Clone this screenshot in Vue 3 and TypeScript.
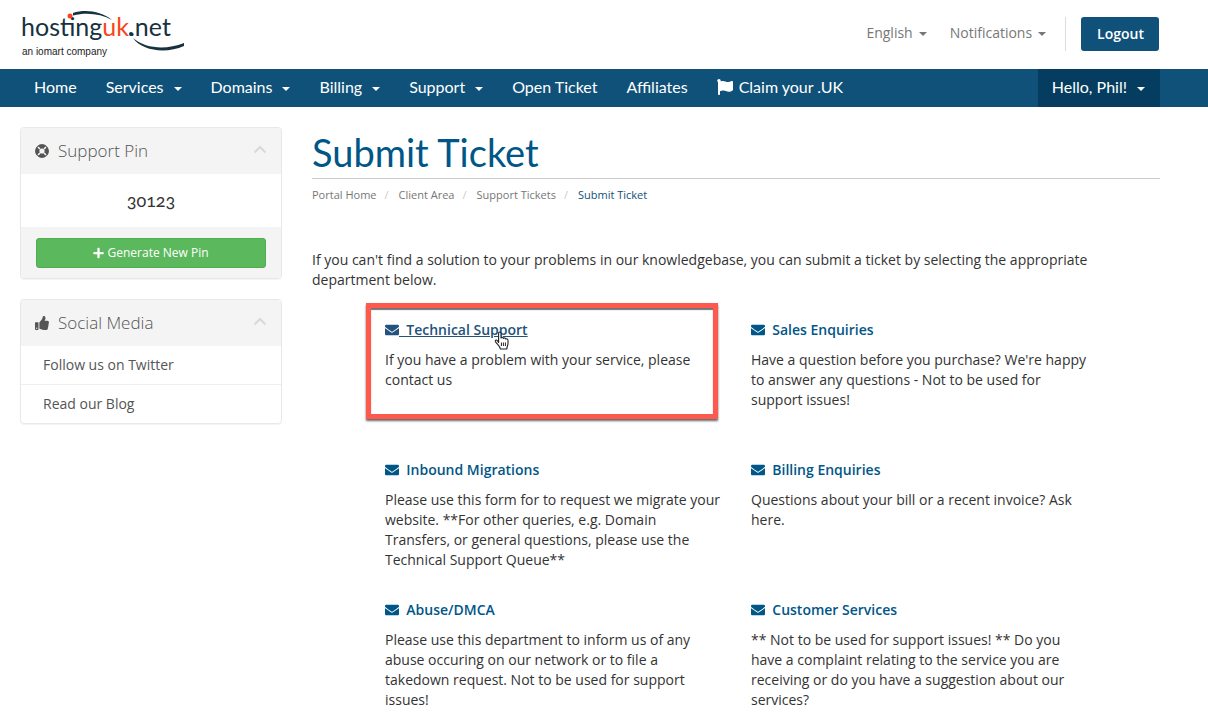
<script setup lang="ts">
interface NavItem {
  label: string
  menu?: boolean
  flag?: boolean
}

interface Department {
  name: string
  text: string
  highlighted?: boolean
}

const navItems: NavItem[] = [
  { label: 'Home' },
  { label: 'Services', menu: true },
  { label: 'Domains', menu: true },
  { label: 'Billing', menu: true },
  { label: 'Support', menu: true },
  { label: 'Open Ticket' },
  { label: 'Affiliates' },
  { label: 'Claim your .UK', flag: true },
]

const crumbs: string[] = ['Portal Home', 'Client Area', 'Support Tickets']

const socialLinks: string[] = ['Follow us on Twitter', 'Read our Blog']

const departments: Department[] = [
  {
    name: 'Technical Support',
    text: 'If you have a problem with your service, please contact us',
    highlighted: true,
  },
  {
    name: 'Sales Enquiries',
    text: "Have a question before you purchase? We're happy to answer any questions - Not to be used for support issues!",
  },
  {
    name: 'Inbound Migrations',
    text: 'Please use this form for to request we migrate your website. **For other queries, e.g. Domain Transfers, or general questions, please use the Technical Support Queue**',
  },
  {
    name: 'Billing Enquiries',
    text: 'Questions about your bill or a recent invoice? Ask here.',
  },
  {
    name: 'Abuse/DMCA',
    text: 'Please use this department to inform us of any abuse occuring on our network or to file a takedown request. Not to be used for support issues!',
  },
  {
    name: 'Customer Services',
    text: '** Not to be used for support issues! ** Do you have a complaint relating to the service you are receiving or do you have a suggestion about our services?',
  },
]
</script>

<template>
  <div class="page">
    <header class="top">
      <a href="#" class="logo" aria-label="hostinguk.net, an iomart company">
        <svg width="170" height="52" viewBox="0 0 170 52">
          <text x="1" y="28" class="logo-name">hosting<tspan class="logo-uk">uk</tspan>.net</text>
          <text x="2" y="47" class="logo-sub">an iomart company</text>
          <path d="M53 5C65 1 81 3 92 12C81 6 67 4 53 7.500Z" fill="#17323f" />
          <circle cx="50" cy="8" r="2.500" fill="#f8461c" />
          <circle cx="111" cy="26" r="2" fill="#17323f" />
          <path d="M113 30C122 43 146 46 164 38L164 35C146 42 126 41 113 30Z" fill="#17323f" />
        </svg>
      </a>
      <div class="tools">
        <button type="button" class="plain">English<span class="caret"></span></button>
        <button type="button" class="plain">Notifications<span class="caret"></span></button>
        <div class="logout-wrap"><button type="button" class="logout">Logout</button></div>
      </div>
    </header>

    <nav class="bar">
      <template v-for="item in navItems" :key="item.label">
        <button v-if="item.menu" type="button" class="nav-item">{{ item.label }}<span class="caret"></span></button>
        <a v-else href="#" class="nav-item">
          <svg v-if="item.flag" class="flag" width="16" height="16" viewBox="0 0 512 512" fill="currentColor">
            <path d="M349.565 98.783C295.978 98.783 251.721 64 184.348 64c-24.955 0-47.309 4.384-68.045 12.013a55.947 55.947 0 0 0 3.586-23.562C118.117 24.015 94.806 1.206 66.338.048 34.345-1.254 8 24.296 8 56c0 19.026 9.497 35.825 24 45.945V488c0 13.255 10.745 24 24 24h16c13.255 0 24-10.745 24-24v-94.4c28.311-12.064 63.582-22.122 114.435-22.122 53.588 0 97.844 34.783 165.217 34.783 48.169 0 86.667-16.294 122.505-40.858C506.84 359.452 512 349.571 512 339.045v-243.1c0-23.393-24.269-38.87-45.485-29.016-34.338 15.948-76.454 31.854-116.95 31.854z" />
          </svg>{{ item.label }}</a>
      </template>
      <button type="button" class="nav-item account">Hello, Phil!<span class="caret"></span></button>
    </nav>

    <div class="body">
      <aside class="side">
        <section class="panel">
          <h2 class="panel-head">
            <svg width="14" height="14" viewBox="0 0 14 14">
              <circle cx="7" cy="7" r="4.7" fill="none" stroke="#555" stroke-width="4.2" />
              <path d="M2.6 2.6L5 5M11.4 2.6L9 5M2.6 11.4L5 9M11.4 11.4L9 9" stroke="#f4f4f4" stroke-width="1.5" />
              <circle cx="7" cy="7" r="6.2" fill="none" stroke="#555" stroke-width="1" />
            </svg>
            <span>Support Pin</span>
            <svg class="chevron" width="14" height="14" viewBox="0 0 14 14"><path d="M1.5 8.5L7 3L12.5 8.5" /></svg>
          </h2>
          <div class="pin">30123</div>
          <div class="panel-foot">
            <button type="button" class="generate">
              <svg width="11" height="12" viewBox="0 0 448 512" fill="currentColor">
                <path d="M416 208H272V64c0-17.67-14.33-32-32-32h-32c-17.67 0-32 14.33-32 32v144H32c-17.67 0-32 14.33-32 32v32c0 17.67 14.33 32 32 32h144v144c0 17.67 14.33 32 32 32h32c17.67 0 32-14.33 32-32V304h144c17.67 0 32-14.33 32-32v-32c0-17.67-14.33-32-32-32z" />
              </svg>
              Generate New Pin
            </button>
          </div>
        </section>

        <section class="panel">
          <h2 class="panel-head">
            <svg width="14" height="14" viewBox="0 0 512 512" fill="#555">
              <path d="M104 224H24c-13.255 0-24 10.745-24 24v240c0 13.255 10.745 24 24 24h80c13.255 0 24-10.745 24-24V248c0-13.255-10.745-24-24-24zM64 472c-13.255 0-24-10.745-24-24s10.745-24 24-24 24 10.745 24 24-10.745 24-24 24zM384 81.452c0 42.416-25.97 66.208-33.277 94.548h101.723c33.397 0 59.397 27.746 59.553 58.098.084 17.938-7.546 37.249-19.439 49.197l-.11.11c9.836 23.337 8.237 56.037-9.308 79.469 8.681 25.895-.069 57.704-16.382 74.757 4.298 17.598 2.244 32.575-6.148 44.632C440.202 511.587 389.616 512 346.839 512l-2.845-.001c-48.287-.017-87.806-17.598-119.56-31.725-15.957-7.099-36.821-15.887-52.651-16.178-6.54-.12-11.783-5.457-11.783-11.998v-213.77c0-3.2 1.282-6.271 3.558-8.521 39.614-39.144 56.648-80.587 89.117-113.111 14.804-14.832 20.188-37.236 25.393-58.902C282.515 39.293 291.817 0 312 0c24 0 72 8 72 81.452z" />
            </svg>
            <span>Social Media</span>
            <svg class="chevron" width="14" height="14" viewBox="0 0 14 14"><path d="M1.5 8.5L7 3L12.5 8.5" /></svg>
          </h2>
          <a v-for="link in socialLinks" :key="link" href="#" class="side-link">{{ link }}</a>
        </section>
      </aside>

      <main class="main">
        <h1>Submit Ticket</h1>
        <ol class="crumbs">
          <li v-for="crumb in crumbs" :key="crumb"><a href="#">{{ crumb }}</a></li>
          <li class="current">Submit Ticket</li>
        </ol>
        <p class="intro">If you can't find a solution to your problems in our knowledgebase, you can submit a ticket by selecting the appropriate department below.</p>
        <div class="departments">
          <article v-for="dept in departments" :key="dept.name" class="dept">
            <div v-if="dept.highlighted" class="frame"></div>
            <a href="#" class="dept-link" :class="{ hovered: dept.highlighted }"><svg class="mail" width="14" height="14" viewBox="0 0 512 512" fill="currentColor"><path d="M502.3 190.8c3.9-3.1 9.7-.2 9.7 4.7V400c0 26.5-21.5 48-48 48H48c-26.5 0-48-21.5-48-48V195.6c0-5 5.7-7.8 9.7-4.7 22.4 17.4 52.1 39.5 154.1 113.6 21.1 15.4 56.7 47.8 92.2 47.6 35.7.3 72-32.8 92.3-47.6 102-74.1 131.6-96.3 154-113.7zM256 320c23.2.4 56.6-29.2 73.4-41.4 132.7-96.3 142.8-104.7 173.4-128.7 5.8-4.5 9.2-11.5 9.2-18.9v-19c0-26.5-21.5-48-48-48H48c-26.5 0-48 21.5-48 48v19c0 7.4 3.4 14.3 9.2 18.9 30.6 23.9 40.7 32.4 173.4 128.7 16.8 12.2 50.2 41.8 73.4 41.4z" /></svg>&nbsp; {{ dept.name }}</a>
            <p>{{ dept.text }}</p>
            <svg v-if="dept.highlighted" class="pointer" width="16" height="19" viewBox="0 0 16 19">
              <path d="M4.6 11.5V2.4C4.6 .6 7 .6 7 2.4V7C7.4 6 9.2 6.1 9.4 7.4C10 6.5 11.6 6.8 11.8 8.1C12.6 7.4 14 7.900 14 9.3V12.5C14 14.6 12.9 15.4 12.8 18H6.4C6.2 15.6 3.6 13.6 1.5 10.8C.6 9.4 2.2 8.3 3.3 9.6Z" fill="#fff" stroke="#222" stroke-width="1.1" stroke-linejoin="round" />
              <path d="M7.4 11.5V15M9.4 11.5V15M11.4 11.5V15" stroke="#222" stroke-width="1" fill="none" />
            </svg>
          </article>
        </div>
      </main>
    </div>
  </div>
</template>

<style>
body {
  margin: 0;
  background: #fff;
}
</style>

<style scoped>
.page {
  font: 14px/20px "Open Sans", "Noto Sans", sans-serif;
  color: #333;
  overflow-x: hidden;
}

a {
  text-decoration: none;
}

button {
  font-family: inherit;
  border: 0;
  cursor: pointer;
}

.caret {
  display: inline-block;
  border: 4px solid transparent;
  border-top-color: currentColor;
  border-bottom: 0;
  vertical-align: middle;
}

.top {
  display: flex;
  justify-content: space-between;
  align-items: center;
  padding: 8px 49px 9px 20px;
}

.logo svg {
  display: block;
}

.logo-name {
  font: 400 25px Lato, sans-serif;
  fill: #17323f;
}

.logo-uk {
  fill: #f8461c;
}

.logo-sub {
  font: 10px "Liberation Sans", sans-serif;
  fill: #222;
}

.tools {
  display: flex;
  align-items: center;
}

.plain {
  margin-right: 23px;
  padding: 0 0 2px;
  background: none;
  color: #777;
  font-size: 14px;
  line-height: 20px;
}

.plain .caret {
  margin-left: 6px;
}

.logout-wrap {
  padding-left: 15px;
  border-left: 1px solid #ddd;
  margin-left: -4px;
}

.logout {
  display: block;
  padding: 7px 15px 7px 16px;
  border-radius: 3px;
  background: #0f5179;
  color: #fff;
  font-size: 14px;
  font-weight: 600;
  line-height: 20px;
}

.bar {
  display: flex;
  padding: 0 48px 0 20px;
  background: #0f5179;
}

.nav-item {
  padding: 8px 15px 10px 14px;
  background: none;
  color: #fff;
  font: 400 16px/20px Lato, sans-serif;
  white-space: nowrap;
}

.nav-item .caret {
  margin-left: 10px;
}

.flag {
  margin-right: 6px;
  vertical-align: -2px;
}

.account {
  margin-left: auto;
  background: #053d60;
}

.body {
  display: grid;
  grid-template-columns: 262px 1fr;
  gap: 30px;
  align-items: start;
  padding: 20px 48px 0 20px;
}

.side {
  display: grid;
  gap: 20px;
}

.panel {
  overflow: hidden;
  border: 1px solid #e8e8e8;
  border-radius: 4px;
  box-shadow: 0 1px 1px rgba(0, 0, 0, 0.05);
}

.panel-head {
  display: flex;
  align-items: center;
  gap: 9px;
  margin: 0;
  padding: 13px 14px;
  background: #f4f4f4;
  color: #555;
  font-size: 17px;
  font-weight: 300;
  line-height: 20px;
}

.chevron {
  margin-left: auto;
  fill: none;
  stroke: #d8d8d8;
  stroke-width: 2;
}

.pin {
  padding: 15px 16px 16px;
  color: #333;
  font: 400 18px/22px Lato, sans-serif;
  font-variant-numeric: oldstyle-nums;
  text-align: center;
}

.panel-foot {
  padding: 11px 15px 10px;
  background: #f4f4f4;
}

.generate {
  width: 100%;
  padding: 5px;
  border: 1px solid #4cae4c;
  border-radius: 3px;
  background: #5cb85c;
  color: #fff;
  font-size: 12px;
  font-weight: 500;
  line-height: 18px;
}

.generate svg {
  vertical-align: -2px;
}

.side-link {
  display: block;
  padding: 9px 22px;
  color: #555;
}

.side-link + .side-link {
  border-top: 1px solid #eee;
}

h1 {
  margin: 0;
  padding: 5px 0 6px;
  border-bottom: 1px solid #ccc;
  color: #005687;
  font: 400 38px/40px Lato, sans-serif;
}

.crumbs {
  display: flex;
  margin: 8px 0 47px;
  padding: 0;
  list-style: none;
  font-size: 11px;
  line-height: 16px;
}

.crumbs a {
  color: #777;
}

.crumbs li + li::before {
  content: "/";
  padding: 0 10px 0 8px;
  color: #ccc;
}

.crumbs .current {
  color: #0f5179;
}

.intro {
  margin: 0 0 30px;
}

.departments {
  display: grid;
  grid-template-columns: 1fr 1fr;
  grid-auto-rows: minmax(110px, auto);
  gap: 30px;
  padding: 0 73px;
}

.dept {
  position: relative;
}

.dept p {
  margin: 10px 0 0;
}

.dept-link {
  color: #005687;
  font-weight: 600;
}

.dept-link.hovered {
  color: #23527c;
  text-decoration: underline;
}

.mail {
  vertical-align: -2px;
}

.frame {
  position: absolute;
  inset: -17px 3px 11px -19px;
  border: 5px solid #ff584c;
  box-shadow: 0 2px 2px rgba(0, 0, 0, 0.6), inset 0 2px 1px rgba(0, 0, 0, 0.55);
  pointer-events: none;
}

.pointer {
  position: absolute;
  top: 11px;
  left: 109px;
}
</style>
